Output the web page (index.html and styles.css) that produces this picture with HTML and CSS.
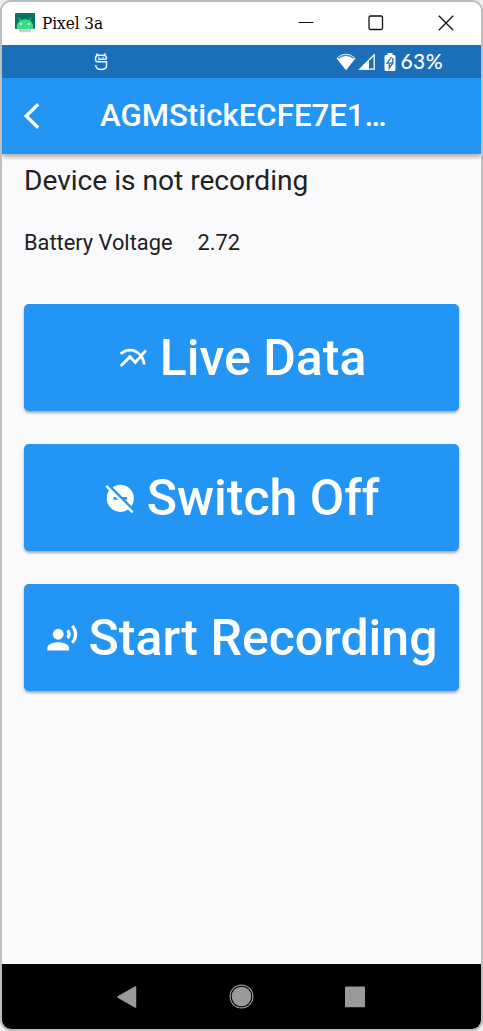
FILE: index.html
```html
<!DOCTYPE html>
<html lang="en">
<head>
<meta charset="utf-8">
<title>Pixel 3a</title>
<link rel="stylesheet" href="styles.css">
</head>
<body>
<div class="window">
  <div class="titlebar">
    <svg class="app-icon" width="20" height="20" viewBox="0 0 20 20">
      <path fill="#c9cfd0" d="M4 15h12v3.200q0 1-1 1H5q-1 0-1-1z"/>
      <rect width="20" height="16" rx="1" fill="#087265"/>
      <path fill="#3ddc84" d="M1.800 16v-2.500a8.200 7.300 0 0 1 16.400 0V16z"/>
      <path stroke="#3ddc84" stroke-width="1" stroke-linecap="round" d="M4.200 5l2 3.200M15.800 5l-2 3.200"/>
      <circle cx="6" cy="11" r=".9" fill="#e5fff0"/><circle cx="14" cy="11" r=".9" fill="#e5fff0"/>
    </svg>
    <span class="window-title">Pixel 3a</span>
    <div class="controls">
      <svg width="16" height="16" viewBox="0 0 16 16"><path d="M.5 7.500h15" stroke="#111" fill="none"/></svg>
      <svg width="16" height="16" viewBox="0 0 16 16"><rect x="1" y="1" width="13.500" height="13.500" rx="1.500" stroke="#111" stroke-width="1.300" fill="none"/></svg>
      <svg width="16" height="16" viewBox="0 0 16 16"><path d="M.8.800l14.400 14.400M15.200.8L.8 15.200" stroke="#111" stroke-width="1.300" fill="none"/></svg>
    </div>
  </div>
  <div class="statusbar">
    <svg class="debug" width="14" height="18" viewBox="0 0 14 18" fill="none" stroke="#eef8ff" stroke-width="1.500">
      <path d="M2.500.500l1.300 1.800M11.500.5l-1.300 1.800"/>
      <path d="M12.500 6V5.200Q12.500 2.300 9.500 2.300h-5Q1.500 2.300 1.500 5.200V6.500Q1.500 8.800 4 8.800h8.500v4q0 3.700-5.500 3.700-4.800 0-5.400-4.300M4 6.200h8.500"/>
      <path d="M4.300 4.400h1.200M8.500 4.400h1.200"/>
    </svg>
    <div class="status-icons">
      <svg width="20" height="18" viewBox="0 0 20 18">
        <path fill="#fff" d="M10 17.200L.5 5.200Q10-3.500 19.500 5.200z"/>
        <path fill="none" stroke="#1a6fb8" stroke-width="1.500" d="M2.200 5.200q7.800-6 15.600 0" opacity=".8"/>
      </svg>
      <svg class="signal" width="18" height="18" viewBox="0 0 18 18">
        <path fill="none" stroke="#fff" stroke-width="1.300" d="M1.800 16.200L16.200 1.800v14.400z"/><path fill="#fff" d="M1 16.800l10-10v10z"/>
      </svg>
      <svg class="battery" width="12" height="18" viewBox="0 0 12 18">
        <path fill="#fff" d="M3.500 0h5v2H10q1.500 0 1.500 1.500v13Q11.500 18 10 18H2Q.5 18 .5 16.500v-13Q.5 2 2 2h1.500z"/>
        <path fill="none" stroke="#1a6fb8" stroke-width="1.300" d="M7.500 4L3.200 10.200h5.300M8.800 5v5.200L5.300 15v-4"/>
      </svg>
      <span class="percent">63%</span>
    </div>
  </div>
  <header class="appbar">
    <svg class="back" width="18" height="28" viewBox="0 0 18 28"><path d="M16.200 2.200L4.200 14l12 11.800" fill="none" stroke="#fff" stroke-width="3.300"/></svg>
    <h1 class="title">AGMStickECFE7E1…</h1>
  </header>
  <main class="content">
    <p class="state">Device is not recording</p>
    <p class="voltage"><span>Battery Voltage</span><span>2.72</span></p>
    <div class="actions">
      <button class="action"><svg class="glyph" viewBox="0 0 24 24"><path d="M22 6.920l-1.410-1.410-2.850 3.210C15.680 6.400 12.830 5 9.610 5 6.720 5 4.070 6.160 2 8l1.420 1.420C5.120 7.930 7.270 7 9.610 7c2.740 0 5.090 1.260 6.770 3.240l-2.880 3.240-4-4L2 16.990l1.500 1.500 6-6.010 4 4 4.050-4.550c.75 1.350 1.250 2.900 1.440 4.550H21c-.22-2.300-.95-4.390-2.040-6.140L22 6.920z"/></svg><span>Live Data</span></button>
      <button class="action"><svg class="glyph" viewBox="0 0 24 24"><path d="M17 11v2h-1.460l4.680 4.680C21.340 16.070 22 14.110 22 12c0-5.520-4.480-10-10-10-2.110 0-4.070.66-5.680 1.780L13.540 11H17zM2.270 2.270L1 3.540l2.780 2.780C2.660 7.930 2 9.890 2 12c0 5.520 4.480 10 10 10 2.110 0 4.070-.66 5.680-1.780L20.460 23l1.270-1.270L11 11 2.270 2.270zM7 13v-2h1.460l2 2H7z"/></svg><span>Switch Off</span></button>
      <button class="action"><svg class="glyph" viewBox="0 0 24 24"><circle cx="9" cy="9" r="4"/><path d="M9 15c-2.670 0-8 1.340-8 4v2h16v-2c0-2.660-5.330-4-8-4zm7.760-9.640l-1.680 1.690c.84 1.180.84 2.710 0 3.890l1.680 1.690c2.020-2.020 2.020-5.070 0-7.270zM20.070 2l-1.630 1.630c2.770 3.020 2.770 7.560 0 10.740L20.070 16c3.900-3.890 3.910-9.950 0-14z"/></svg><span>Start Recording</span></button>
    </div>
  </main>
  <nav class="navbar">
    <svg width="24" height="26" viewBox="0 0 24 26"><path d="M3 13L20.500 3v20z" fill="#999a9b" stroke="#999a9b" stroke-width="1.500" stroke-linejoin="round"/></svg>
    <svg width="26" height="26" viewBox="0 0 26 26"><circle cx="12.500" cy="12.500" r="11.400" fill="none" stroke="#999a9b" stroke-width="1.200"/><circle cx="12.500" cy="12.500" r="9.800" fill="#999a9b"/></svg>
    <svg width="20" height="26" viewBox="0 0 20 26"><rect y="2.500" width="20" height="20.700" rx="1" fill="#999a9b"/></svg>
  </nav>
</div>
</body>
</html>
```
FILE: styles.css
```css
* { box-sizing: border-box; }
body { margin: 0; background: #eee; font-family: Roboto, "Liberation Sans", sans-serif; }
svg { display: block; flex: none; }
.window {
  width: 483px; height: 1031px;
  display: flex; flex-direction: column;
  border: 2px solid #bfbebf; border-radius: 11px;
  overflow: hidden; background: #fafafc;
}
.titlebar { height: 43px; flex: none; display: flex; align-items: center; padding: 0 27px 1px 13px; background: #fff; }
.window-title { margin-left: 7px; font: 17px "DejaVu Serif Condensed", "DejaVu Serif", serif; color: #000; letter-spacing: -.05px; white-space: nowrap; }
.controls { margin-left: auto; display: flex; gap: 54px; }
.statusbar { height: 33px; flex: none; display: flex; align-items: center; justify-content: space-between; padding: 0 38px 0 92px; background: #1a6fb8; }
.status-icons { display: flex; align-items: center; }
.signal { margin-left: 2px; }
.battery { margin-left: 7.500px; }
.percent { margin-left: 5px; color: #fff; font: 500 21px/24px Lato, sans-serif; letter-spacing: .4px; padding-bottom: 2px; }
.appbar { height: 76px; flex: none; display: flex; align-items: center; padding-left: 19.500px; background: #2395f5; color: #fff; box-shadow: 0 3px 4px rgba(0, 0, 0, .3); }
.title { margin: 0 0 0 60.500px; font-size: 31.2px; font-weight: 500; line-height: 36px; white-space: nowrap; }
.content { flex: 1; padding: 10px 22px 0; color: #212123; }
.state { margin: 0; font-size: 28.1px; line-height: 34px; }
.voltage { margin: 32px 0 0; display: flex; gap: 25px; font-size: 21.8px; line-height: 26px; }
.actions { margin-top: 48.400px; display: flex; flex-direction: column; gap: 33px; }
.action {
  height: 107px; padding: 1px 0 0; border: 0; border-radius: 5px;
  display: flex; align-items: center; justify-content: center; gap: 10.500px;
  background: #2395f5; color: #fff; font: 500 50px/58px Roboto, sans-serif;
  white-space: nowrap; box-shadow: 0 2px 3px rgba(0, 0, 0, .34);
}
.glyph { width: 32.600px; height: 32.600px; fill: #fff; }
.navbar { height: 65px; flex: none; display: flex; align-items: center; justify-content: space-between; padding: 0 116px 0 113px; background: #000; }
```
